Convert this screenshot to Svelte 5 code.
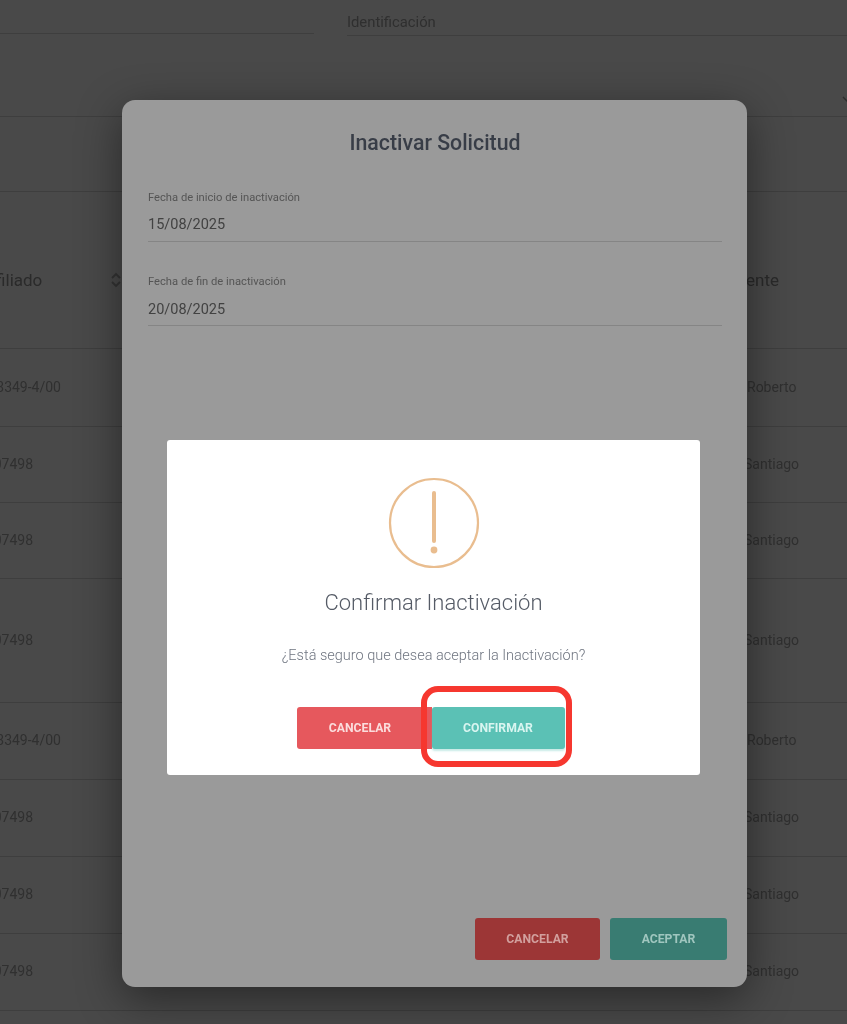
<script>
  const rows = [
    { h: 78, l: '3349-4/00', r: 'Roberto' },
    { h: 76, l: '07498', r: 'Santiago' },
    { h: 76, l: '07498', r: 'Santiago' },
    { h: 124, l: '07498', r: 'Santiago' },
    { h: 77, l: '3349-4/00', r: 'Roberto' },
    { h: 77, l: '07498', r: 'Santiago' },
    { h: 77, l: '07498', r: 'Santiago' },
    { h: 77, l: '07498', r: 'Santiago' },
    { h: 14, l: '', r: '' }
  ];
</script>

<div class="page">
  <div class="bg">
    <div class="fields">
      <div class="field left"></div>
      <div class="field right"><span>Identificación</span></div>
    </div>
    <div class="band one">
      <svg class="chev" width="10" height="6" viewBox="0 0 10 6"><path d="M1 1l4 4 4-4" fill="none" stroke="#2d2d2d" stroke-width="1.4" /></svg>
    </div>
    <div class="band two"></div>
    <div class="thead">
      <div class="th-left">
        <span>Afiliado</span>
        <svg width="10" height="18" viewBox="0 0 10 18"><path d="M1 7l4-4 4 4M1 11l4 4 4-4" fill="none" stroke="#333" stroke-width="1.8" /></svg>
      </div>
      <span class="th-right">Paciente</span>
    </div>
    {#each rows as row}
      <div class="row" style="height:{row.h}px">
        <div class="cell-left" class:wide={row.l.length > 6}><span>{row.l}</span></div>
        <div class="cell-right" class:rob={row.r === 'Roberto'}>{row.r}</div>
      </div>
    {/each}
  </div>

  <section class="modal">
    <h2>Inactivar Solicitud</h2>
    <div class="input first">
      <label for="ini">Fecha de inicio de inactivación</label>
      <div id="ini" class="value">15/08/2025</div>
    </div>
    <div class="input second">
      <label for="fin">Fecha de fin de inactivación</label>
      <div id="fin" class="value">20/08/2025</div>
    </div>
    <div class="actions">
      <button class="dim-red">CANCELAR</button>
      <button class="dim-green">ACEPTAR</button>
    </div>
  </section>

  <section class="alert">
    <svg class="warn" width="92" height="92" viewBox="0 0 92 92">
      <circle cx="46" cy="46" r="44" fill="none" stroke="#e9bd8f" stroke-width="2.2" />
      <path d="M46 16v48" stroke="#e9bd8f" stroke-width="4" stroke-linecap="round" fill="none" />
      <circle cx="46" cy="73" r="3.4" fill="#e9bd8f" />
    </svg>
    <h3>Confirmar Inactivación</h3>
    <p>¿Está seguro que desea aceptar la Inactivación?</p>
    <div class="alert-actions">
      <button class="red">CANCELAR</button>
      <button class="teal">CONFIRMAR</button>
      <div class="mark"></div>
    </div>
  </section>
</div>

<style>
  :global(body) { margin: 0; background: #494949; }
  .page {
    position: relative;
    width: 847px;
    height: 1024px;
    overflow: hidden;
    background: #494949;
    font-family: Roboto, "Liberation Sans", sans-serif;
    filter: blur(0.5px);
  }
  .bg { color: #333; }
  .fields { display: flex; height: 36px; }
  .field { box-sizing: border-box; }
  .field.left { width: 314px; height: 34px; border-bottom: 1px solid #3e3e3e; }
  .field.right {
    width: 500px;
    flex: 1;
    margin-left: 33px;
    height: 36px;
    border-bottom: 1px solid #3e3e3e;
    padding-top: 14px;
    font-size: 14.8px;
    line-height: 17px;
    color: #2f2f2f;
  }
  .band { box-sizing: border-box; border-bottom: 1px solid #3e3e3e; position: relative; }
  .band.one { height: 81px; display: flex; justify-content: flex-end; align-items: flex-start; padding: 60px 0 0; }
  .chev { margin-right: -5px; }
  .band.two { height: 75px; }
  .thead {
    box-sizing: border-box;
    height: 157px;
    border-bottom: 1px solid #3e3e3e;
    display: flex;
    justify-content: space-between;
    align-items: flex-start;
    padding-top: 77px;
    font-size: 17px;
    line-height: 22px;
    color: #2a2a2a;
  }
  .th-left { display: flex; align-items: center; margin-left: -15px; gap: 69px; }
  .th-right { margin-right: 68px; }
  .row {
    box-sizing: border-box;
    border-bottom: 1px solid #3e3e3e;
    padding-bottom: 2px;
    display: flex;
    justify-content: space-between;
    align-items: center;
    font-size: 14px;
    color: #303030;
  }
  .cell-left { width: 33px; display: flex; justify-content: flex-end; white-space: nowrap; }
  .cell-left.wide { width: 61px; }
  .cell-right { width: 103px; box-sizing: border-box; }
  .cell-right.rob { padding-left: 3px; }

  .modal {
    position: absolute;
    left: 122px;
    top: 100px;
    width: 625px;
    height: 887px;
    box-sizing: border-box;
    padding: 31px 25px 27px 26px;
    background: #9a9a9a;
    border-radius: 13px;
    box-shadow: 0 12px 45px rgba(0, 0, 0, 0.45);
    display: flex;
    flex-direction: column;
  }
  h2 {
    margin: 0;
    text-align: center;
    font-size: 21.3px;
    line-height: 24px;
    font-weight: 500;
    color: #383d47;
  }
  .input { border-bottom: 1px solid #858585; box-sizing: border-box; }
  .input.first { margin-top: 36px; height: 51px; }
  .input.second { margin-top: 33px; height: 51px; }
  .input label {
    display: block;
    font-size: 11.2px;
    line-height: 14px;
    color: #555;
  }
  .value { margin-top: 10px; font-size: 14.5px; line-height: 20px; color: #424242; }
  .input.second .value { margin-top: 11px; }
  .actions { margin-top: auto; display: flex; justify-content: flex-end; gap: 10px; margin-right: -5px; }
  button {
    border: 0;
    font-family: inherit;
    font-weight: 700;
    font-size: 12.2px;
    height: 42px;
    border-radius: 3px;
    padding: 0;
  }
  .dim-red { width: 125px; background: #9c3636; color: #d2a09e; }
  .dim-green { width: 117px; background: #397c72; color: #a0c6bf; }

  .alert {
    position: absolute;
    left: 167px;
    top: 440px;
    width: 533px;
    height: 335px;
    box-sizing: border-box;
    padding-top: 37px;
    background: #fff;
    border-radius: 3px;
    display: flex;
    flex-direction: column;
    align-items: center;
  }
  .warn { margin-left: 1px; }
  h3 {
    margin: 21px 0 0;
    font-size: 22px;
    line-height: 26px;
    font-weight: 300;
    color: #555b66;
  }
  p {
    margin: 31px 0 0;
    font-size: 14.5px;
    line-height: 18px;
    font-weight: 300;
    color: #6f7580;
  }
  .alert-actions {
    position: relative;
    margin-top: 42px;
    display: flex;
    margin-right: 6px;
  }
  .red { width: 135px; padding-right: 8px; background: #e6585d; color: #fbdcdc; border-radius: 3px 0 0 3px; }
  .teal { width: 133px; background: #5bc1b5; color: #d9f5f0; box-shadow: 0 2px 2px rgba(94, 196, 184, 0.35); }
  .mark {
    position: absolute;
    left: 124px;
    top: -21px;
    width: 151px;
    height: 81px;
    box-sizing: border-box;
    border: 6px solid #f6372f;
    border-radius: 17px;
  }
</style>
